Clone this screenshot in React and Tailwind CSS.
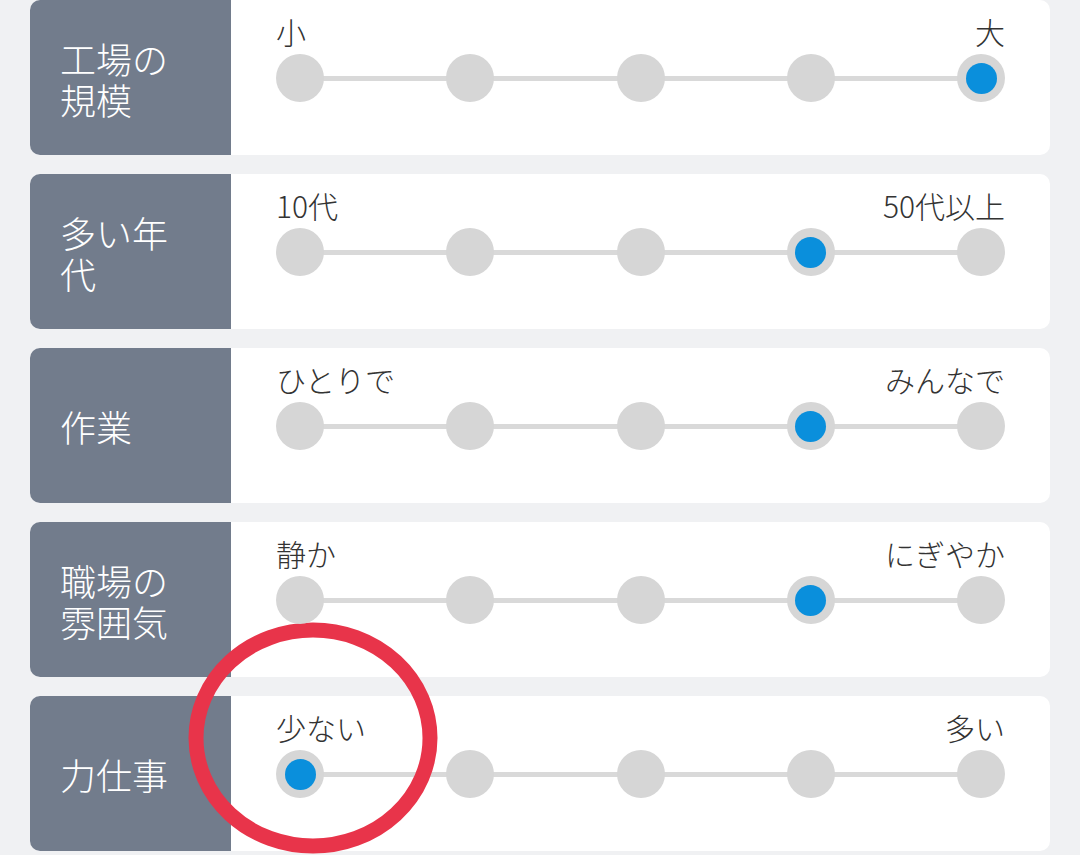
import React from "react";

const rows = [
  { label: "工場の規模", left: "小", right: "大", sel: 4 },
  { label: "多い年代", left: "10代", right: "50代以上", sel: 3 },
  { label: "作業", left: "ひとりで", right: "みんなで", sel: 3 },
  { label: "職場の雰囲気", left: "静か", right: "にぎやか", sel: 3 },
  { label: "力仕事", left: "少ない", right: "多い", sel: 0 },
];

function Dot({ active }) {
  return (
    <div className="relative z-10 w-[48px] h-[48px] rounded-full bg-[#d6d6d6] flex items-center justify-center">
      {active && <div className="w-[31px] h-[31px] rounded-full bg-[#0a8fdc]" />}
    </div>
  );
}

function Row({ label, left, right, sel }) {
  return (
    <div className="h-[155px] rounded-[10px] overflow-hidden flex bg-white shrink-0">
      <div className="w-[201px] shrink-0 bg-[#727c8c] flex items-center pl-[30px]">
        <div className="w-[125px] text-white text-[36px] leading-[41px] pt-[2px] font-light">{label}</div>
      </div>
      <div className="flex-1 px-[45px] pt-[11px]">
        <div className="flex justify-between h-[41px] leading-[40px] text-[30px] text-[#333333] font-light">
          <span>{left}</span>
          <span>{right}</span>
        </div>
        <div className="relative flex justify-between h-[48px] items-center mt-[2px]">
          <div className="absolute left-[24px] right-[24px] top-[22px] h-[5px] bg-[#d9d9d9]" />
          {[0, 1, 2, 3, 4].map((i) => (
            <Dot key={i} active={i === sel} />
          ))}
        </div>
      </div>
    </div>
  );
}

export default function App() {
  return (
    <div
      className="relative w-[1080px] h-[855px] overflow-hidden bg-[#f0f1f3] px-[30px] flex flex-col gap-[19px]"
      style={{ fontFamily: '"Noto Sans CJK JP", "Noto Sans", sans-serif' }}
    >
      {rows.map((r) => (
        <Row key={r.label} {...r} />
      ))}
      <svg
        className="absolute left-[188px] top-[622px]"
        width="250"
        height="232"
        viewBox="0 0 250 232"
      >
        <ellipse cx="125" cy="116" rx="117" ry="108" fill="none" stroke="#e8344a" strokeWidth="15" />
      </svg>
    </div>
  );
}
